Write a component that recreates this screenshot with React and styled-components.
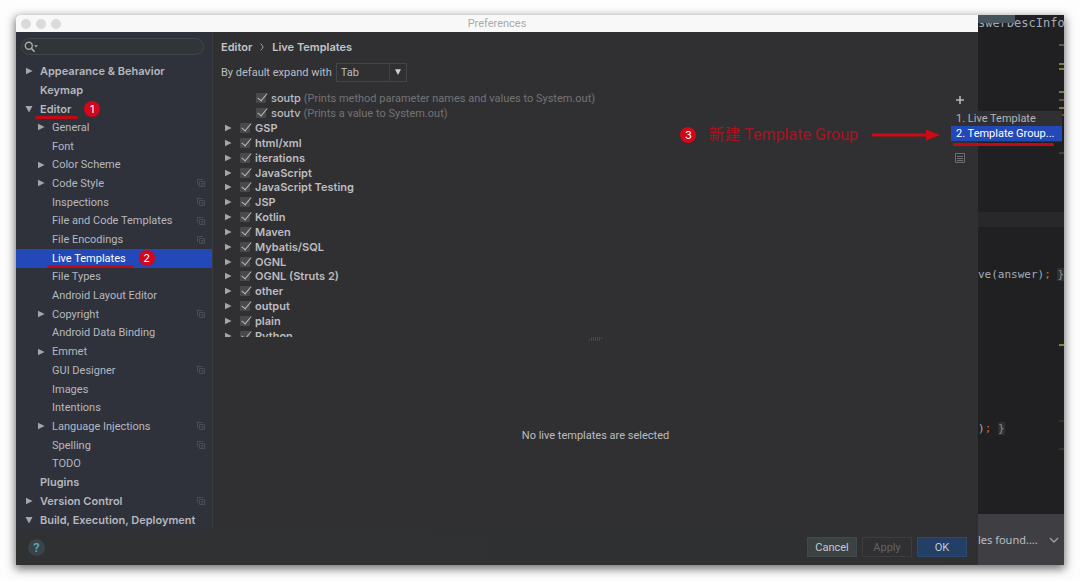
import React from 'react'
import styled, {createGlobalStyle} from 'styled-components'

const settings = [
  {name: 'Appearance & Behavior', arrow: 'right', top: true},
  {name: 'Keymap', top: true},
  {name: 'Editor', arrow: 'down', top: true, step: 1},
  {name: 'General', arrow: 'right'},
  {name: 'Font'},
  {name: 'Color Scheme', arrow: 'right'},
  {name: 'Code Style', arrow: 'right', project: true},
  {name: 'Inspections', project: true},
  {name: 'File and Code Templates', project: true},
  {name: 'File Encodings', project: true},
  {name: 'Live Templates', active: true, step: 2},
  {name: 'File Types'},
  {name: 'Android Layout Editor'},
  {name: 'Copyright', arrow: 'right', project: true},
  {name: 'Android Data Binding'},
  {name: 'Emmet', arrow: 'right'},
  {name: 'GUI Designer', project: true},
  {name: 'Images'},
  {name: 'Intentions'},
  {name: 'Language Injections', arrow: 'right', project: true},
  {name: 'Spelling', project: true},
  {name: 'TODO'},
  {name: 'Plugins', top: true},
  {name: 'Version Control', arrow: 'right', top: true, project: true},
  {name: 'Build, Execution, Deployment', arrow: 'down', top: true},
]

const templates = [
  {name: 'soutp', note: '(Prints method parameter names and values to System.out)'},
  {name: 'soutv', note: '(Prints a value to System.out)'},
  {name: 'GSP'},
  {name: 'html/xml'},
  {name: 'iterations'},
  {name: 'JavaScript'},
  {name: 'JavaScript Testing'},
  {name: 'JSP'},
  {name: 'Kotlin'},
  {name: 'Maven'},
  {name: 'Mybatis/SQL'},
  {name: 'OGNL'},
  {name: 'OGNL (Struts 2)'},
  {name: 'other'},
  {name: 'output'},
  {name: 'plain'},
  {name: 'Python'},
]

const marks = [
  [30, '#6d6d6d'], [49, '#a39a4c'], [54, '#a39a4c'], [77, '#a39a4c'], [85, '#8c5a3c'],
  [93, '#a39a4c'], [100, '#8c5a3c'], [138, '#4d4a34'], [330, '#b3a42a'], [406, '#38382f'], [434, '#38382f'],
]

function Arrow({dir}) {
  return (
    <svg width="8" height="8" viewBox="0 0 8 8" aria-hidden="true">
      <path d={dir === 'down' ? 'M0.5 1h7L4 7.5z' : 'M1 0.8v6.4L7.6 4z'} fill="#a4a6a9" />
    </svg>
  )
}

function ProjectIcon() {
  return (
    <svg width="8" height="8" viewBox="0 0 8 8" fill="none" stroke="#484c56" aria-hidden="true">
      <path d="M0.5 6V0.5H6M2.5 2.5h5v5h-5zM4 4.5h2.5M4 6h2.5" />
    </svg>
  )
}

function Sidebar() {
  return (
    <Side>
      <SearchBox>
        <svg width="15" height="12" viewBox="0 0 15 12" aria-hidden="true">
          <circle cx="4.8" cy="4.8" r="3.5" fill="none" stroke="#a9acad" strokeWidth="1.4" />
          <path d="M7.4 7.4L10.6 10.8" stroke="#a9acad" strokeWidth="1.6" />
          <path d="M10 4.2h4l-2 2.4z" fill="#a9acad" />
        </svg>
        <input type="text" aria-label="Search settings" />
      </SearchBox>
      <Tree>
        {settings.map((item) => (
          <TreeRow key={item.name} $top={item.top} $active={item.active}>
            <Toggle disabled={!item.arrow} aria-label={'Toggle ' + item.name}>
              {item.arrow && <Arrow dir={item.arrow} />}
            </Toggle>
            <TreeLink href="#">
              {item.name}
              {item.step && <Underline />}
            </TreeLink>
            {item.step && <Badge>{item.step}</Badge>}
            {item.project && <ProjectSlot><ProjectIcon /></ProjectSlot>}
          </TreeRow>
        ))}
      </Tree>
    </Side>
  )
}

function TemplateList() {
  return (
    <ListArea>
      <ListClip>
        <List>
          {templates.map((t) => (
            <ListRow key={t.name} $child={t.note}>
              {!t.note && <Toggle aria-label={'Expand ' + t.name}><Arrow dir="right" /></Toggle>}
              <label>
                <Check type="checkbox" defaultChecked />
                <Name $child={t.note}>{t.name}</Name>
                {t.note && <Note>{t.note}</Note>}
              </label>
            </ListRow>
          ))}
        </List>
      </ListClip>
      <Tools>
        <ToolButton aria-label="Add">
          <svg width="10" height="10" viewBox="0 0 10 10">
            <path d="M5 1v8M1 5h8" stroke="#b4b4b6" strokeWidth="1.6" />
          </svg>
        </ToolButton>
        <ToolButton aria-label="Duplicate">
          <svg width="10" height="10" viewBox="0 0 10 10" fill="none" stroke="#6c6f70">
            <path d="M0.5 0.5h9v9h-9zM2 3.5h6M2 5.5h6M2 7.5h6" />
          </svg>
        </ToolButton>
      </Tools>
      <Hint>
        <Badge>3</Badge>
        <HintText>新建 Template Group</HintText>
        <svg width="68" height="12" viewBox="0 0 68 12" aria-hidden="true">
          <path d="M1 6h56" stroke="#cf0a14" strokeWidth="3" strokeLinecap="round" />
          <path d="M54 0.5L68 6L54 11.5z" fill="#cf0a14" />
        </svg>
      </Hint>
      <Popup>
        <li><PopupItem>1. Live Template</PopupItem></li>
        <li><PopupItem $active>2. Template Group...<Underline $popup /></PopupItem></li>
      </Popup>
    </ListArea>
  )
}

function EditorBehind() {
  return (
    <Behind>
      <Code>
        <TabEdge />
        <CodeLine $gap={0} $end>swerDescInfo</CodeLine>
        <CaretLine />
        <CodeLine $gap={40}>ve(answer)<b>;</b> <i>{'}'}</i></CodeLine>
        <CodeLine $gap={138}>)<b>;</b> <i>{'}'}</i></CodeLine>
        <Stripe width="5" height="499" viewBox="0 0 5 499" aria-hidden="true">
          {marks.map(([y, color]) => <path key={y} d={`M0 ${y}h5`} stroke={color} strokeWidth="1.5" />)}
        </Stripe>
      </Code>
      <Status>
        <span>les found....</span>
        <svg width="10" height="6" viewBox="0 0 10 6" aria-hidden="true">
          <path d="M1 1l4 4l4-4" fill="none" stroke="#a0a0a2" strokeWidth="1.3" />
        </svg>
      </Status>
    </Behind>
  )
}

function App() {
  return (
    <Page>
      <GlobalStyle />
      <Screen>
        <Dialog>
          <TitleBar>
            <Lights><Light /><Light /><Light /></Lights>
            <Title>Preferences</Title>
          </TitleBar>
          <Body>
            <Sidebar />
            <Content>
              <Crumbs>
                <span>Editor</span>
                <svg width="4" height="8" viewBox="0 0 4 8" aria-hidden="true">
                  <path d="M0.7 0.7Q3 3 3 4T0.7 7.3" fill="none" stroke="#a8a8aa" />
                </svg>
                <span>Live Templates</span>
              </Crumbs>
              <ExpandRow>
                <label htmlFor="expand">By default expand with</label>
                <SelectBox>
                  <select id="expand" defaultValue="Tab">
                    <option>Tab</option>
                    <option>Enter</option>
                    <option>Space</option>
                  </select>
                  <SelectArrow>
                    <svg width="8" height="8" viewBox="0 0 8 8"><path d="M1 1.2h6L4 7z" fill="#d0d0d2" /></svg>
                  </SelectArrow>
                </SelectBox>
              </ExpandRow>
              <TemplateList />
              <Splitter>
                <svg width="14" height="4" viewBox="0 0 14 4" aria-hidden="true">
                  <path d="M2 1h12M0 3h12" stroke="#606063" strokeDasharray="1 1" />
                </svg>
              </Splitter>
              <Empty>No live templates are selected</Empty>
            </Content>
          </Body>
          <Footer>
            <HelpButton aria-label="Help">?</HelpButton>
            <Buttons>
              <Button>Cancel</Button>
              <Button $kind="off" disabled>Apply</Button>
              <Button $kind="ok">OK</Button>
            </Buttons>
          </Footer>
        </Dialog>
        <EditorBehind />
      </Screen>
    </Page>
  )
}

export default App

const GlobalStyle = createGlobalStyle`
*{
  box-sizing:border-box;
}
body{
  margin:0;
  background:#fdfdfd;
  font-family:Roboto, "Noto Sans CJK SC", sans-serif;
  font-size:11px;
  color:#bcbdc0;
}
button, input, select{
  font:inherit;
  color:inherit;
  margin:0;
  padding:0;
  border:none;
  background:none;
}
ul{
  list-style:none;
  margin:0;
  padding:0;
}
svg{
  display:block;
  flex:none;
}
`
const Page = styled.div`
min-height:100vh;
display:flex;
padding:15px 16px 16px;
`
const Screen = styled.div`
flex:1;
display:flex;
border-radius:3px 0 0 0;
box-shadow:0 3px 10px 1px rgba(0,0,0,0.55);
`
const Dialog = styled.div`
flex:1;
display:flex;
flex-direction:column;
background:#303033;
border-radius:3px 0 0 0;
`
const TitleBar = styled.div`
height:17px;
display:grid;
grid-template-columns:1fr auto 1fr;
align-items:center;
padding:0 5px;
background:#f8f8f8;
border-radius:3px 0 0 0;
`
const Lights = styled.div`
display:flex;
gap:5px;
`
const Light = styled.span`
width:10px;
height:10px;
border-radius:50%;
background:#dadada;
`
const Title = styled.span`
color:#aaaaaa;
`
const Body = styled.div`
flex:1;
display:flex;
`
const Side = styled.div`
width:197px;
display:flex;
flex-direction:column;
background:#2f323b;
border-right:1px solid #373b42;
`
const SearchBox = styled.div`
height:17px;
margin:6px 8px 7px 5px;
padding:0 2px;
display:flex;
align-items:center;
border:1px solid #40484b;
border-radius:9px;
background:#2f3538;
input{
  flex:1;
  min-width:0;
  outline:none;
}
`
const Tree = styled.ul`
flex:1;
display:flex;
flex-direction:column;
`
const TreeRow = styled.li`
flex:1;
display:flex;
align-items:center;
padding-left:${(p) => (p.$top ? 9 : 21)}px;
padding-right:7px;
font-family:${(p) => (p.$top ? 'Inter' : 'Roboto')}, sans-serif;
font-weight:${(p) => (p.$top ? 600 : 400)};
color:${(p) => (p.$active ? '#ffffff' : '#b5b8bf')};
background:${(p) => (p.$active ? '#2349b8' : 'none')};
`
const Toggle = styled.button`
width:15px;
flex:none;
`
const TreeLink = styled.a`
position:relative;
color:inherit;
text-decoration:none;
white-space:nowrap;
`
const Underline = styled.span`
position:absolute;
left:${(p) => (p.$popup ? 2 : -5)}px;
right:${(p) => (p.$popup ? 8 : -7)}px;
bottom:${(p) => (p.$popup ? -5 : -3)}px;
height:3px;
border-radius:2px;
background:#c20a16;
`
const Badge = styled.span`
width:16px;
height:16px;
flex:none;
margin-left:13px;
border-radius:50%;
background:#d3061a;
color:#ffffff;
font-family:Inter, sans-serif;
font-size:11px;
font-weight:400;
line-height:16px;
text-align:center;
`
const ProjectSlot = styled.span`
margin-left:auto;
`
const Content = styled.div`
flex:1;
display:flex;
flex-direction:column;
`
const Crumbs = styled.div`
height:30px;
display:flex;
align-items:center;
gap:8px;
padding-left:8px;
font-family:Inter, sans-serif;
font-weight:600;
color:#c4c4c6;
`
const ExpandRow = styled.div`
height:20px;
display:flex;
align-items:center;
gap:4px;
padding-left:8px;
`
const SelectBox = styled.div`
position:relative;
width:71px;
height:19px;
border:1px solid #454548;
select{
  width:100%;
  height:100%;
  padding-left:4px;
  appearance:none;
  outline:none;
}
`
const SelectArrow = styled.span`
position:absolute;
top:0;
right:0;
bottom:0;
width:17px;
display:flex;
align-items:center;
justify-content:center;
border-left:1px solid #414144;
pointer-events:none;
`
const ListArea = styled.div`
position:relative;
display:flex;
margin:9px 13px 0 8px;
`
const ListClip = styled.div`
flex:1;
height:246px;
overflow:hidden;
`
const List = styled.ul`
height:252px;
display:flex;
flex-direction:column;
`
const ListRow = styled.li`
flex:1;
display:flex;
align-items:center;
padding-left:${(p) => (p.$child ? 35 : 3)}px;
label{
  display:flex;
  align-items:center;
  margin-left:${(p) => (p.$child ? 0 : 1)}px;
}
`
const Check = styled.input`
appearance:none;
position:relative;
width:10px;
height:10px;
margin-right:5px;
background:#48494b;
border-radius:1px;
&:checked::after{
  content:'';
  position:absolute;
  left:4px;
  top:-2px;
  width:4px;
  height:9px;
  border:solid #b9babc;
  border-width:0 1px 1px 0;
  transform:rotate(40deg);
}
`
const Name = styled.span`
color:#bdbdc0;
font-family:Inter, sans-serif;
font-weight:${(p) => (p.$child ? 500 : 600)};
`
const Note = styled.span`
margin-left:3px;
color:#737376;
`
const Tools = styled.div`
display:flex;
flex-direction:column;
gap:48px;
padding-top:4px;
`
const ToolButton = styled.button`
width:10px;
height:10px;
`
const Hint = styled.div`
position:absolute;
top:34px;
right:25px;
display:flex;
align-items:center;
`
const HintText = styled.span`
margin:0 14px 0 12px;
font-size:16px;
line-height:20px;
color:#a81420;
`
const Popup = styled.ul`
position:absolute;
z-index:1;
top:20px;
right:-97px;
width:111px;
padding-bottom:1px;
background:#303033;
`
const PopupItem = styled.button`
position:relative;
width:100%;
height:15px;
padding-left:5px;
text-align:left;
white-space:nowrap;
color:${(p) => (p.$active ? '#ffffff' : '#b4b4b6')};
background:${(p) => (p.$active ? '#2349b8' : 'none')};
`
const Splitter = styled.div`
height:4px;
display:flex;
justify-content:center;
`
const Empty = styled.div`
flex:1;
display:flex;
align-items:center;
justify-content:center;
`
const Footer = styled.div`
height:36px;
display:flex;
align-items:center;
justify-content:space-between;
padding:0 11px 0 12px;
background:linear-gradient(to right, #2f3132, #303033);
`
const HelpButton = styled.button`
width:17px;
height:17px;
border-radius:50%;
background:#39434a;
color:#5fa3b8;
font-size:13px;
font-weight:600;
line-height:17px;
`
const Buttons = styled.div`
display:flex;
gap:5px;
`
const Button = styled.button`
width:50px;
height:20px;
border:1px solid ${(p) => (p.$kind === 'off' ? '#3d3d40' : p.$kind === 'ok' ? '#2b4a70' : '#43494b')};
background:${(p) => (p.$kind === 'off' ? 'none' : p.$kind === 'ok' ? '#233f66' : '#3b4244')};
color:${(p) => (p.$kind === 'off' ? '#636366' : '#c9cacc')};
`
const Behind = styled.div`
width:86px;
display:flex;
flex-direction:column;
background:#202022;
`
const Code = styled.div`
flex:1;
position:relative;
overflow:hidden;
font-family:"DejaVu Sans Mono", monospace;
color:#a3adb8;
`
const TabEdge = styled.div`
position:absolute;
top:0;
left:0;
width:37px;
height:8px;
background:#46525c;
`
const CodeLine = styled.div`
margin-top:${(p) => p.$gap}px;
height:16px;
line-height:16px;
font-size:${(p) => (p.$end ? 12 : 11)}px;
white-space:pre;
b{
  font-weight:400;
  color:#b5763e;
}
i{
  font-style:normal;
  color:#8c8c84;
  background:#303032;
}
`
const CaretLine = styled.div`
height:15px;
margin-top:181px;
background:#28282a;
`
const Stripe = styled.svg`
position:absolute;
top:0;
right:0;
`
const Status = styled.div`
height:51px;
display:flex;
align-items:center;
justify-content:space-between;
padding-right:5px;
background:#3f3f43;
font-family:"Noto Sans", sans-serif;
`
